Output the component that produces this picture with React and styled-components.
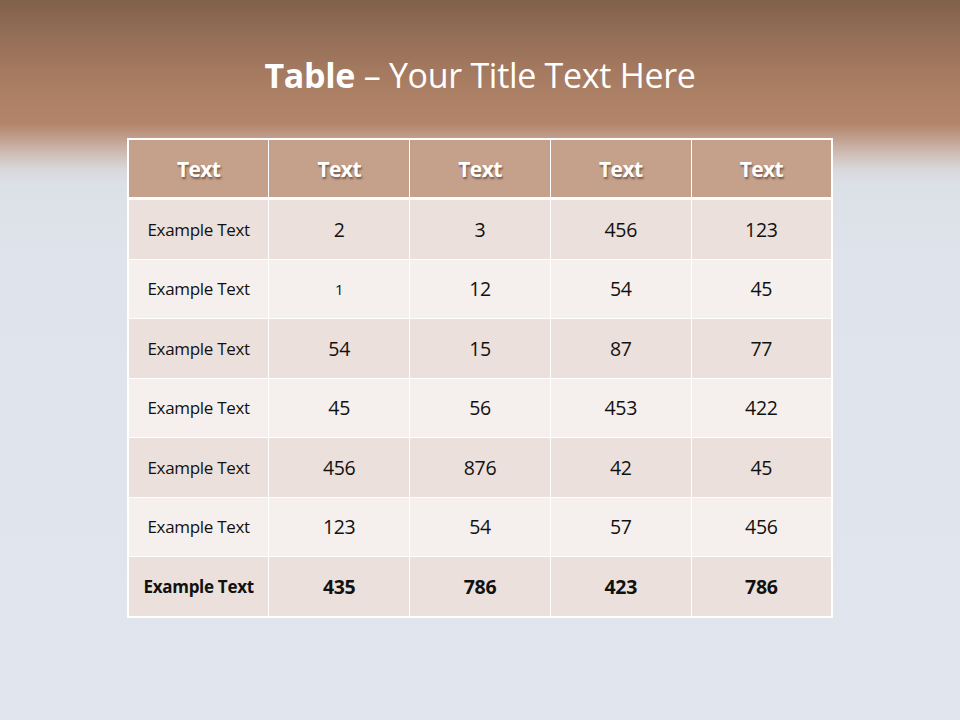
import React from "react";
import styled, { createGlobalStyle } from "styled-components";

const Global = createGlobalStyle`
  html, body { margin: 0; padding: 0; }
  body {
    width: 960px;
    height: 720px;
    overflow: hidden;
    font-family: "Open Sans", "Liberation Sans", sans-serif;
  }
`;

const Slide = styled.div`
  width: 960px;
  height: 720px;
  box-sizing: border-box;
  background: linear-gradient(
    to bottom,
    #80614b 0px,
    #977058 40px,
    #ab7f64 90px,
    #b3866b 124px,
    #c3a292 140px,
    #d0c0ba 155px,
    #d9d8dc 170px,
    #dce1e8 185px,
    #dfe4ec 260px,
    #e1e6ee 720px
  );
  display: flex;
  flex-direction: column;
  align-items: center;
`;

const Title = styled.h1`
  margin: 53px 0 0;
  height: 85px;
  font-size: 34px;
  font-weight: 400;
  color: #ffffff;
  letter-spacing: -0.3px;
  line-height: 44px;
`;

const Strong = styled.span`
  font-weight: 700;
`;

const Table = styled.table`
  width: 706px;
  border-collapse: collapse;
  border: 2px solid #ffffff;
  table-layout: fixed;
`;

const HeadCell = styled.th`
  height: 57px;
  padding: 0;
  background: #c5a18b;
  color: #ffffff;
  font-size: 21px;
  font-weight: 700;
  letter-spacing: -0.6px;
  text-shadow: 1px 2px 2px rgba(60, 30, 15, 0.55);
  border: 1px solid #ffffff;
  border-bottom: 3px solid #ffffff;
  text-align: center;
`;

const Row = styled.tr`
  background: ${(p) => (p.$alt ? "#f5f0ed" : "#ebe0db")};
`;

const Cell = styled.td`
  height: 58.5px;
  padding: 0;
  border: 1px solid #ffffff;
  text-align: center;
  color: #111111;
  font-size: ${(p) => (p.$label ? "17px" : p.$small ? "15px" : "19.5px")};
  font-weight: ${(p) => (p.$bold ? 700 : 400)};
  letter-spacing: ${(p) => (p.$label ? "-0.3px" : "-0.3px")};
`;

const rows = [
  ["2", "3", "456", "123"],
  ["1", "12", "54", "45"],
  ["54", "15", "87", "77"],
  ["45", "56", "453", "422"],
  ["456", "876", "42", "45"],
  ["123", "54", "57", "456"],
  ["435", "786", "423", "786"],
];

export default function App() {
  return (
    <>
      <Global />
      <Slide>
        <Title>
          <Strong>Table</Strong> – Your Title Text Here
        </Title>
        <Table>
          <thead>
            <tr>
              {[0, 1, 2, 3, 4].map((i) => (
                <HeadCell key={i}>Text</HeadCell>
              ))}
            </tr>
          </thead>
          <tbody>
            {rows.map((r, i) => {
              const bold = i === rows.length - 1;
              return (
                <Row key={i} $alt={i % 2 === 1}>
                  <Cell $label $bold={bold}>Example Text</Cell>
                  {r.map((v, j) => (
                    <Cell key={j} $bold={bold} $small={v === "1"}>
                      {v}
                    </Cell>
                  ))}
                </Row>
              );
            })}
          </tbody>
        </Table>
      </Slide>
    </>
  );
}
